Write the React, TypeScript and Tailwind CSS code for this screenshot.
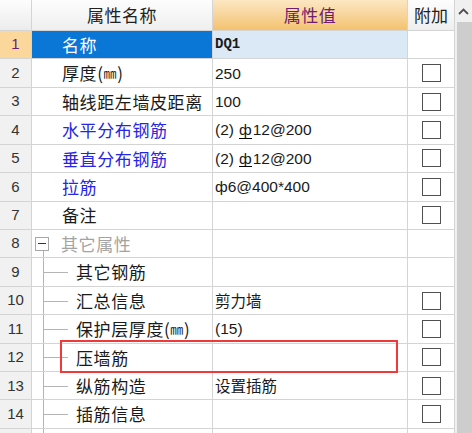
import React from "react";

type Row = {
  n: number;
  name: React.ReactNode;
  value?: React.ReactNode;
  blue?: boolean;
  check?: boolean;
  group?: boolean;
  child?: boolean;
  selected?: boolean;
};

const CJK = "font-['Noto_Sans_CJK_SC','Noto_Sans',sans-serif]";
const VAL = "font-['Liberation_Sans','Noto_Sans_CJK_SC',sans-serif]";

// HRB bar symbol: ф with a bar underneath
const Bar = () => (
  <span className="relative inline-block px-[1px] ml-[4px]">
    ф
    <span className="absolute left-[1px] right-[1px] bottom-[3px] h-px bg-black" />
  </span>
);

const rows: Row[] = [
  { n: 1, name: "名称", value: <span className="font-['Liberation_Mono',monospace] font-bold text-[14px]">DQ1</span>, selected: true },
  { n: 2, name: <>厚度(<span className="text-[13px]">㎜</span>)</>, value: "250", check: true },
  { n: 3, name: "轴线距左墙皮距离", value: "100", check: true },
  { n: 4, name: "水平分布钢筋", value: <>(2)<Bar />12@200</>, blue: true, check: true },
  { n: 5, name: "垂直分布钢筋", value: <>(2)<Bar />12@200</>, blue: true, check: true },
  { n: 6, name: "拉筋", value: "ф6@400*400", blue: true, check: true },
  { n: 7, name: "备注", check: true },
  { n: 8, name: "其它属性", group: true },
  { n: 9, name: "其它钢筋", child: true },
  { n: 10, name: "汇总信息", value: <span className={CJK}>剪力墙</span>, child: true, check: true },
  { n: 11, name: <>保护层厚度(<span className="text-[13px]">㎜</span>)</>, value: "(15)", child: true, check: true },
  { n: 12, name: "压墙筋", child: true, check: true },
  { n: 13, name: "纵筋构造", value: <span className={CJK}>设置插筋</span>, child: true, check: true },
  { n: 14, name: "插筋信息", child: true, check: true },
  { n: 15, name: "", child: true, check: true },
];

const cell = "border-r border-b border-[#d4d4d4] flex items-center";

const Checkbox = () => (
  <div className="w-[19px] h-[18px] border-[1.5px] border-[#505050] bg-white" />
);

export default function App() {
  return (
    <div className="w-[472px] h-[433px] overflow-hidden bg-white flex relative select-none">
      <div className="w-[455px] shrink-0">
        {/* header */}
        <div className={`grid grid-cols-[32px_181px_195px_47px] h-[31px] ${CJK} text-[17px] text-[#222]`}>
          <div className={`${cell} bg-gradient-to-b from-[#fdfdfd] to-[#ececec]`} />
          <div className={`${cell} justify-center bg-gradient-to-b from-[#fdfdfd] to-[#efefef] tracking-[0.5px]`}>属性名称</div>
          <div className={`${cell} justify-center bg-gradient-to-b from-[#fce7c2] to-[#f3c26e] text-[#6e1c70] tracking-[0.5px]`}>属性值</div>
          <div className={`${cell} justify-center bg-gradient-to-b from-[#fdfdfd] to-[#efefef]`}>附加</div>
        </div>

        {rows.map((r) => (
          <div key={r.n} className="grid grid-cols-[32px_181px_195px_47px] h-[28.43px]">
            <div
              className={`${cell} justify-center ${VAL} text-[15px] ${
                r.selected ? "bg-[#fcd79b] text-[#6b1f6e]" : "bg-[#f1f1f1] text-[#333]"
              }`}
            >
              {r.n <= 14 ? r.n : ""}
            </div>
            <div
              className={`${cell} relative ${CJK} text-[17px] tracking-[0.6px] ${
                r.selected
                  ? "bg-[#0a76d6] text-white pl-[30px]"
                  : r.blue
                  ? "text-[#2525e6] pl-[30px]"
                  : r.group
                  ? "text-[#a3a3a3] pl-[3px]"
                  : r.child
                  ? "text-[#1a1a1a] pl-[44px]"
                  : "text-[#1a1a1a] pl-[30px]"
              }`}
            >
              {r.group && (
                <>
                  <div className="w-[14px] h-[14px] border border-[#a8a8a8] flex items-center justify-center mr-[12px] bg-white">
                    <div className="w-[8px] h-[1.5px] bg-[#333]" />
                  </div>
                  <div className="absolute left-[11px] top-[21px] bottom-0 w-px bg-[#b4b4b4]" />
                </>
              )}
              {r.child && (
                <>
                  <div className="absolute left-[11px] top-0 bottom-0 w-px bg-[#b4b4b4]" />
                  <div className="absolute left-[12px] w-[24px] top-1/2 h-px bg-[#b4b4b4]" />
                </>
              )}
              {r.name}
            </div>
            <div
              className={`${cell} pl-[2px] ${VAL} text-[15.5px] text-[#1a1a1a] whitespace-nowrap ${
                r.selected ? "bg-[#dbe9f6]" : ""
              }`}
            >
              {r.value}
            </div>
            <div className={`${cell} justify-center`}>{r.check && <Checkbox />}</div>
          </div>
        ))}
      </div>

      {/* scrollbar */}
      <div className="flex-1 bg-[#f0f0f0] flex flex-col">
        <div className="h-[22px] flex items-center justify-center">
          <svg width="11" height="7" viewBox="0 0 11 7">
            <polyline points="1,6 5.5,1.5 10,6" fill="none" stroke="#505050" strokeWidth="1.8" />
          </svg>
        </div>
        <div className="flex-1 ml-[2px] bg-[#cdcdcd]" />
      </div>

      {/* red highlight box */}
      <div className="absolute left-[60px] top-[340px] w-[338px] h-[33px] border-2 border-[#f03a3a] pointer-events-none" />
    </div>
  );
}
